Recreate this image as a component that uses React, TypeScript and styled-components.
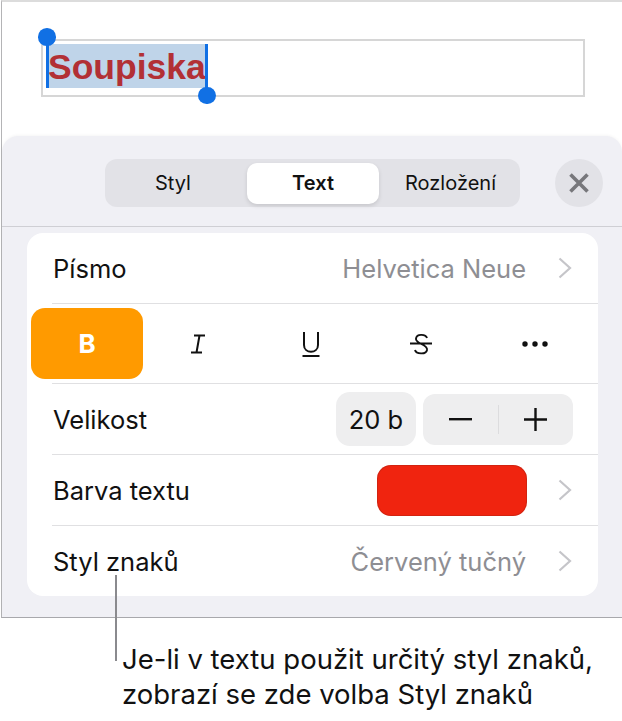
import React from "react";
import styled, { createGlobalStyle } from "styled-components";

const Global = createGlobalStyle`
  html, body { margin: 0; padding: 0; background: #fff; }
  body { font-family: Inter, "Liberation Sans", sans-serif; color: #111; }
`;

const Page = styled.div`
  width: 622px;
  height: 721px;
  overflow: hidden;
  background: #fff;
  position: relative;
`;

const Frame = styled.div`
  box-sizing: border-box;
  width: 621px;
  height: 618px;
  margin-left: 1px;
  border-top: 2px solid #dcdcdc;
  border-left: 1px solid #b4b4b6;
  border-bottom: 1px solid #a9a9ad;
  background: #fff;
  display: flex;
  flex-direction: column;
`;

const Canvas = styled.div`
  height: 134px;
  flex: none;
  padding: 37px 0 0 39px;
  box-sizing: border-box;
`;

const TextBox = styled.div`
  box-sizing: border-box;
  width: 544px;
  height: 58px;
  border: 2px solid #d6d6d6;
  padding: 3px 0 0 3px;
`;

const Selection = styled.div`
  position: relative;
  width: 161px;
  height: 44px;
  background: #bfd4e9;
  color: #b23035;
  font-family: "Liberation Sans", Arial, sans-serif;
  font-weight: 700;
  font-size: 35.5px;
  line-height: 47px;
  padding-left: 2px;
  box-sizing: border-box;
  white-space: nowrap;
`;

const Caret = styled.span<{ $end?: boolean }>`
  position: absolute;
  top: 0;
  bottom: 0;
  width: 3px;
  background: #1170e4;
  ${(p) => (p.$end ? "right: -1px;" : "left: 0;")}
`;

const Knob = styled.span<{ $end?: boolean }>`
  position: absolute;
  width: 17.5px;
  height: 17.5px;
  border-radius: 50%;
  background: #1170e4;
  ${(p) => (p.$end ? "right: -8.7px; bottom: -16px;" : "left: -7.7px; top: -16px;")}
`;

const Sheet = styled.div`
  flex: 1;
  background: #f0f0f5;
  border-radius: 16px 16px 0 0;
  box-shadow: 0 -1px 3px rgba(0, 0, 0, 0.04);
  display: flex;
  flex-direction: column;
`;

const SheetHeader = styled.div`
  height: 91px;
  flex: none;
  box-sizing: border-box;
  border-bottom: 1px solid #cfcfd4;
  display: flex;
  align-items: flex-start;
  padding: 23px 19px 0 103px;
  justify-content: space-between;
`;

const Tabs = styled.div`
  width: 415px;
  height: 48px;
  border-radius: 12px;
  background: #e2e2e7;
  display: flex;
  align-items: center;
`;

const Tab = styled.div<{ $active?: boolean; $w: number; $nudge?: number }>`
  box-sizing: border-box;
  width: ${(p) => p.$w}px;
  height: 41px;
  flex: none;
  display: flex;
  align-items: center;
  justify-content: center;
  padding-left: ${(p) => Math.max(p.$nudge ?? 0, 0)}px;
  padding-right: ${(p) => Math.max(-(p.$nudge ?? 0), 0)}px;
  font-size: 20px;
  letter-spacing: ${(p) => (p.$active ? "0.1px" : "0")};
  font-weight: ${(p) => (p.$active ? 600 : 400)};
  color: #111;
  border-radius: 10px;
  ${(p) =>
    p.$active
      ? "background: #fff; box-shadow: 0 2px 4px rgba(0,0,0,0.12);"
      : ""}
`;

const Close = styled.div`
  width: 48px;
  height: 48px;
  border-radius: 50%;
  background: #e2e2e7;
  display: flex;
  align-items: center;
  justify-content: center;
`;

const Card = styled.div`
  margin: 6px 24px 0 25px;
  background: #fff;
  border-radius: 16px;
  height: 363px;
  flex: none;
  display: flex;
  flex-direction: column;
`;

const Row = styled.div<{ $h: number; $last?: boolean }>`
  height: ${(p) => p.$h}px;
  flex: none;
  box-sizing: border-box;
  margin-left: 25px;
  padding-right: 26px;
  display: flex;
  align-items: center;
  justify-content: space-between;
  ${(p) => (p.$last ? "" : "border-bottom: 1px solid #e0e0e2;")}
`;

const StyleRow = styled.div`
  height: 80px;
  flex: none;
  box-sizing: border-box;
  position: relative;
  display: flex;
  align-items: center;
  padding: 0 0 1px 4px;
  &::after {
    content: "";
    position: absolute;
    left: 25px;
    right: 0;
    bottom: 0;
    height: 1px;
    background: #e0e0e2;
  }
`;

const Label = styled.span`
  font-size: 25.5px;
  padding-left: 1px;
  color: #111;
`;

const Right = styled.div`
  display: flex;
  align-items: center;
`;

const Value = styled.span`
  font-size: 25.5px;
  margin-right: 1px;
  color: #8e8e93;
`;

const Chevron = styled.svg`
  width: 14px;
  height: 22px;
  margin-left: 31px;
  flex: none;
`;

const StyleButton = styled.div<{ $active?: boolean; $w: number }>`
  position: relative;
  z-index: 1;
  width: ${(p) => p.$w}px;
  height: 71px;
  flex: none;
  border-radius: 14px;
  background: ${(p) => (p.$active ? "#ff9a00" : "transparent")};
  color: ${(p) => (p.$active ? "#fff" : "#111")};
  display: flex;
  align-items: center;
  justify-content: center;
  font-size: 26px;
  font-weight: ${(p) => (p.$active ? 700 : 400)};
`;

const Stepper = styled.div`
  width: 150px;
  height: 51px;
  margin: 0 -1px 0 7px;
  border-radius: 12px;
  background: #eeeeef;
  display: flex;
  align-items: center;
`;

const StepCell = styled.div`
  flex: 1;
  height: 100%;
  display: flex;
  align-items: center;
  justify-content: center;
`;

const StepDivider = styled.div`
  width: 1px;
  height: 29px;
  background: #dcdcde;
`;

const SizeBox = styled.div`
  width: 80px;
  height: 54px;
  border-radius: 14px;
  background: #eeeeef;
  display: flex;
  align-items: center;
  justify-content: center;
  font-size: 25.5px;
`;

const Swatch = styled.div`
  width: 150px;
  height: 51px;
  border-radius: 14px;
  background: #f0240f;
  box-shadow: inset 0 0 0 1px rgba(120, 30, 20, 0.25);
`;

const Caption = styled.div`
  padding: 24px 0 0 122px;
  font-size: 27.5px;
  line-height: 35px;
  color: #111;
  white-space: nowrap;
`;

const Leader = styled.div`
  position: absolute;
  left: 114.5px;
  top: 575px;
  width: 2.5px;
  height: 86px;
  background: #8a8a8e;
`;

const Chev = () => (
  <Chevron viewBox="0 0 14 22" fill="none">
    <path d="M1.5 1.5 L12 11 L1.5 20.5" stroke="#c5c5c9" strokeWidth="2.2" />
  </Chevron>
);

export default function App() {
  return (
    <Page>
      <Global />
      <Frame>
        <Canvas>
          <TextBox>
            <Selection>
              Soupiska
              <Caret />
              <Caret $end />
              <Knob />
              <Knob $end />
            </Selection>
          </TextBox>
        </Canvas>
        <Sheet>
          <SheetHeader>
            <Tabs>
              <Tab $w={142} $nudge={-6}>Styl</Tab>
              <Tab $w={132} $active>Text</Tab>
              <Tab $w={141} $nudge={2}>Rozložení</Tab>
            </Tabs>
            <Close>
              <svg width="24" height="24" viewBox="0 0 24 24" fill="none">
                <path d="M3.5 3.5 L20.5 20.5 M20.5 3.5 L3.5 20.5" stroke="#77777b" strokeWidth="3.6" />
              </svg>
            </Close>
          </SheetHeader>
          <Card>
            <Row $h={71}>
              <Label>Písmo</Label>
              <Right>
                <Value>Helvetica Neue</Value>
                <Chev />
              </Right>
            </Row>
            <StyleRow>
              <StyleButton $active $w={112}>B</StyleButton>
              <StyleButton $w={110}>
                <svg width="20" height="24" viewBox="0 0 20 24" fill="none">
                  <path d="M6 3.5 H17 M3 20.5 H14 M11.5 3.5 L8.5 20.5" stroke="#111" strokeWidth="2" />
                </svg>
              </StyleButton>
              <StyleButton $w={115}>
                <svg width="20" height="28" viewBox="0 0 20 28" fill="none">
                  <path d="M3 2 V15 C3 24 17 24 17 15 V2 M1.5 26 H18.5" stroke="#111" strokeWidth="2" />
                </svg>
              </StyleButton>
              <StyleButton $w={106}>
                <svg width="24" height="24" viewBox="0 0 24 24" fill="none">
                  <path d="M18 6 C17 2.5 8 1 7 6.5 C6 12 19 12 18 18 C17 23 7 22 6 18 M1 11.5 H23" stroke="#111" strokeWidth="1.9" />
                </svg>
              </StyleButton>
              <StyleButton $w={122}>
                <svg width="26" height="6" viewBox="0 0 26 6" fill="#111">
                  <circle cx="3" cy="3" r="2.7" />
                  <circle cx="13" cy="3" r="2.7" />
                  <circle cx="23" cy="3" r="2.7" />
                </svg>
              </StyleButton>
            </StyleRow>
            <Row $h={71}>
              <Label>Velikost</Label>
              <Right>
                <SizeBox>20 b</SizeBox>
                <Stepper>
                  <StepCell>
                    <svg width="23" height="3" viewBox="0 0 23 3"><rect width="23" height="2.4" fill="#111" /></svg>
                  </StepCell>
                  <StepDivider />
                  <StepCell>
                    <svg width="23" height="23" viewBox="0 0 23 23"><path d="M0 11.5 H23 M11.5 0 V23" stroke="#111" strokeWidth="2.4" /></svg>
                  </StepCell>
                </Stepper>
              </Right>
            </Row>
            <Row $h={71}>
              <Label>Barva textu</Label>
              <Right>
                <Swatch />
                <Chev />
              </Right>
            </Row>
            <Row $h={70} $last>
              <Label>Styl znaků</Label>
              <Right>
                <Value>Červený tučný</Value>
                <Chev />
              </Right>
            </Row>
          </Card>
        </Sheet>
      </Frame>
      <Caption>
        Je-li v textu použit určitý styl znaků,
        <br />
        zobrazí se zde volba Styl znaků
      </Caption>
      <Leader />
    </Page>
  );
}
